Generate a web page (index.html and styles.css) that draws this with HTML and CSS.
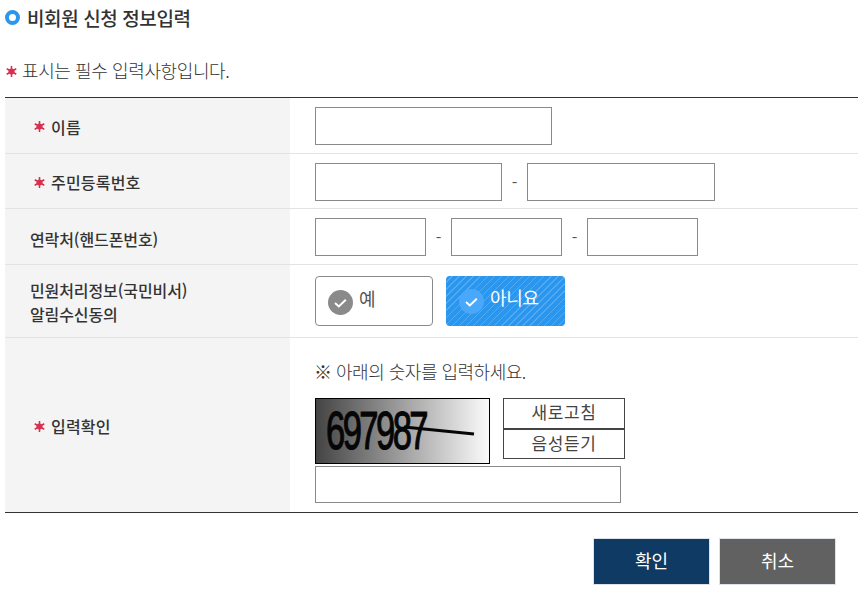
FILE: index.html
```html
<!DOCTYPE html>
<html lang="ko">
<head>
<meta charset="utf-8">
<title>비회원 신청 정보입력</title>
<link rel="stylesheet" href="styles.css">
</head>
<body>
<svg class="defs" width="0" height="0" aria-hidden="true"><defs><g id="ast"><path d="M6 0v12M.8 3l10.400 6M11.200 3L.8 9" stroke="#d9304f" stroke-width="1.700" fill="none"/><circle cx="6" cy="6" r="3.300" fill="#d9304f"/></g></defs></svg>
<h2 class="title"><span class="ring"></span>비회원 신청 정보입력</h2>
<p class="note"><svg class="star star-note" viewBox="0 0 12 12"><use href="#ast"/></svg>표시는 필수 입력사항입니다.</p>
<div class="form">
  <div class="row row-name">
    <div class="label"><svg class="star" viewBox="0 0 12 12"><use href="#ast"/></svg>이름</div>
    <div class="field"><input class="input w237" type="text"></div>
  </div>
  <div class="row row-id">
    <div class="label"><svg class="star" viewBox="0 0 12 12"><use href="#ast"/></svg>주민등록번호</div>
    <div class="field"><input class="input w187" type="text"><span class="dash">-</span><input class="input w188" type="text"></div>
  </div>
  <div class="row row-tel">
    <div class="label plain">연락처(핸드폰번호)</div>
    <div class="field"><input class="input w111" type="text"><span class="dash">-</span><input class="input w111" type="text"><span class="dash">-</span><input class="input w111" type="text"></div>
  </div>
  <div class="row row-agree">
    <div class="label plain">민원처리정보(국민비서)<br>알림수신동의</div>
    <div class="field choices">
      <div class="choice choice-yes">
        <svg class="check" viewBox="0 0 25 25"><circle cx="12.5" cy="12.5" r="12.5" fill="#8a8a8a"/><path d="M7 13l3.800 3.400 7-6.600" fill="none" stroke="#fff" stroke-width="2"/></svg>
        <span class="choice-text">예</span>
      </div>
      <div class="choice choice-no">
        <svg class="check" viewBox="0 0 25 25"><circle cx="12.5" cy="12.5" r="12.5" fill="#4aa8fb"/><path d="M7 13l3.800 3.400 7-6.600" fill="none" stroke="#fff" stroke-width="2"/></svg>
        <span class="choice-text">아니요</span>
      </div>
    </div>
  </div>
  <div class="row row-captcha">
    <div class="label"><svg class="star" viewBox="0 0 12 12"><use href="#ast"/></svg>입력확인</div>
    <div class="field captcha-field">
      <p class="hint">※ 아래의 숫자를 입력하세요.</p>
      <div class="captcha-top">
        <div class="captcha">
          <span class="captcha-num">697987</span>
          <svg class="captcha-line" viewBox="0 0 175 66"><path d="M88 28L158 35" stroke="#050505" stroke-width="3" fill="none"/></svg>
        </div>
        <div class="captcha-btns">
          <div class="cbtn">새로고침</div>
          <div class="cbtn">음성듣기</div>
        </div>
      </div>
      <input class="input w306" type="text">
    </div>
  </div>
</div>
<div class="actions">
  <div class="btn btn-ok">확인</div>
  <div class="btn btn-cancel">취소</div>
</div>
</body>
</html>
```
FILE: styles.css
```css
* { box-sizing: border-box; }
html, body { margin: 0; padding: 0; }
body {
  width: 858px;
  height: 594px;
  overflow: hidden;
  background: #fff;
  color: #333;
  font-family: "Noto Sans CJK KR", "Noto Sans", sans-serif;
  font-size: 15px;
}
.defs { position: absolute; }
.title {
  display: flex;
  align-items: center;
  height: 24px;
  margin: 5px 0 0 5px;
  font-size: 19px;
  font-weight: 500;
  letter-spacing: -0.4px;
  color: #333;
}
.ring {
  width: 15px;
  height: 15px;
  margin-right: 7px;
  border: 4px solid #2b96ee;
  border-radius: 50%;
  background: #fff;
}
.note {
  display: flex;
  align-items: center;
  height: 24px;
  margin: 29px 0 0 5px;
  font-size: 18px;
  font-weight: 300;
  letter-spacing: -0.4px;
  color: #333;
}
.star {
  flex: none;
  width: 11px;
  height: 11px;
  margin-right: 6px;
}
.star-note { margin: 2px 5px 0 1px; }
.form {
  margin: 15px 0 0 5px;
  border-top: 1px solid #333;
  border-bottom: 1px solid #333;
}
.row {
  display: flex;
  border-bottom: 1px solid #e3e3e3;
}
.row:last-child { border-bottom: 0; }
.row-name { height: 56px; }
.row-id { height: 55px; }
.row-tel { height: 56px; }
.row-agree { height: 73px; }
.row-captcha { height: 174px; }
.label {
  display: flex;
  align-items: center;
  flex: 0 0 285px;
  padding: 2px 0 0 29px;
  background: #f4f4f4;
  font-size: 16px;
  font-weight: 500;
  letter-spacing: 0.2px;
  color: #333;
}
.label.plain {
  display: block;
  align-self: stretch;
  padding-left: 25px;
  line-height: 24px;
  letter-spacing: -0.1px;
}
.row-tel .label.plain { padding-top: 18px; }
.row-agree .label.plain { padding-top: 13px; }
.field {
  display: flex;
  align-items: center;
  padding-left: 25px;
  font-size: 16px;
}
.row-name .field { align-items: flex-start; padding-top: 9px; }
.row-id .field, .row-tel .field { align-items: flex-start; padding-top: 9px; }
.input {
  height: 38px;
  border: 1px solid #8a8a8a;
  border-radius: 0;
  background: #fff;
  padding: 0 8px;
}
.w237 { width: 237px; }
.w187 { width: 187px; }
.w188 { width: 188px; }
.w111 { width: 111px; }
.w306 { width: 306px; height: 37px; }
.dash {
  width: 25px;
  line-height: 38px;
  text-align: center;
  color: #555;
}
.choices { gap: 13px; align-items: flex-start; padding-top: 11px; }
.choice {
  display: flex;
  align-items: flex-start;
  width: 119px;
  height: 50px;
  padding: 13px 0 0 12px;
  border-radius: 4px;
  font-size: 18px;
  line-height: 22px;
  letter-spacing: -0.3px;
}
.choice-yes { width: 118px; border: 1px solid #8a8a8a; color: #555; }
.choice-no {
  padding-left: 13px;
  color: #fff;
  background: repeating-linear-gradient(135deg, #2b96ee 0 4px, #52aaf3 4px 5px);
}
.check { width: 25px; height: 25px; margin: 0 6px 0 0; flex: none; }
.choice-text { margin-top: -3px; }
.captcha-field {
  display: block;
  padding-top: 20px;
}
.hint {
  height: 26px;
  margin: 0 0 14px -1px;
  font-size: 18px;
  font-weight: 300;
  line-height: 26px;
  letter-spacing: -0.5px;
  color: #333;
}
.captcha-top { display: flex; gap: 13px; margin-bottom: 2px; }
.captcha {
  position: relative;
  width: 175px;
  height: 66px;
  overflow: hidden;
  border: 1px solid #000;
  background: linear-gradient(90deg, #444, #fbfbfb);
}
.captcha-num {
  position: absolute;
  left: 10px;
  top: 3px;
  display: block;
  font-family: "Liberation Sans", sans-serif;
  font-size: 54px;
  line-height: 56px;
  letter-spacing: -4px;
  color: #060606;
  -webkit-text-stroke: 1.2px #060606;
  transform: scaleX(0.64);
  transform-origin: left top;
}
.captcha-line {
  position: absolute;
  left: 0;
  top: 0;
  width: 175px;
  height: 66px;
}
.captcha-btns { width: 122px; }
.cbtn {
  height: 31px;
  border: 1px solid #444;
  text-align: center;
  font-size: 17px;
  font-weight: 400;
  letter-spacing: 0.6px;
  line-height: 26px;
  color: #444;
}
.cbtn + .cbtn { margin-top: -1px; border-top-width: 2px; line-height: 26px; }
.actions {
  display: flex;
  justify-content: flex-end;
  gap: 9px;
  margin-top: 25px;
  padding-right: 22px;
}
.btn {
  width: 117px;
  height: 47px;
  border: 1px solid #dde3e8;
  text-align: center;
  font-size: 18px;
  line-height: 42px;
  color: #fff;
}
.btn-ok { background: #0f3a63; }
.btn-cancel { background: #616161; }
```
